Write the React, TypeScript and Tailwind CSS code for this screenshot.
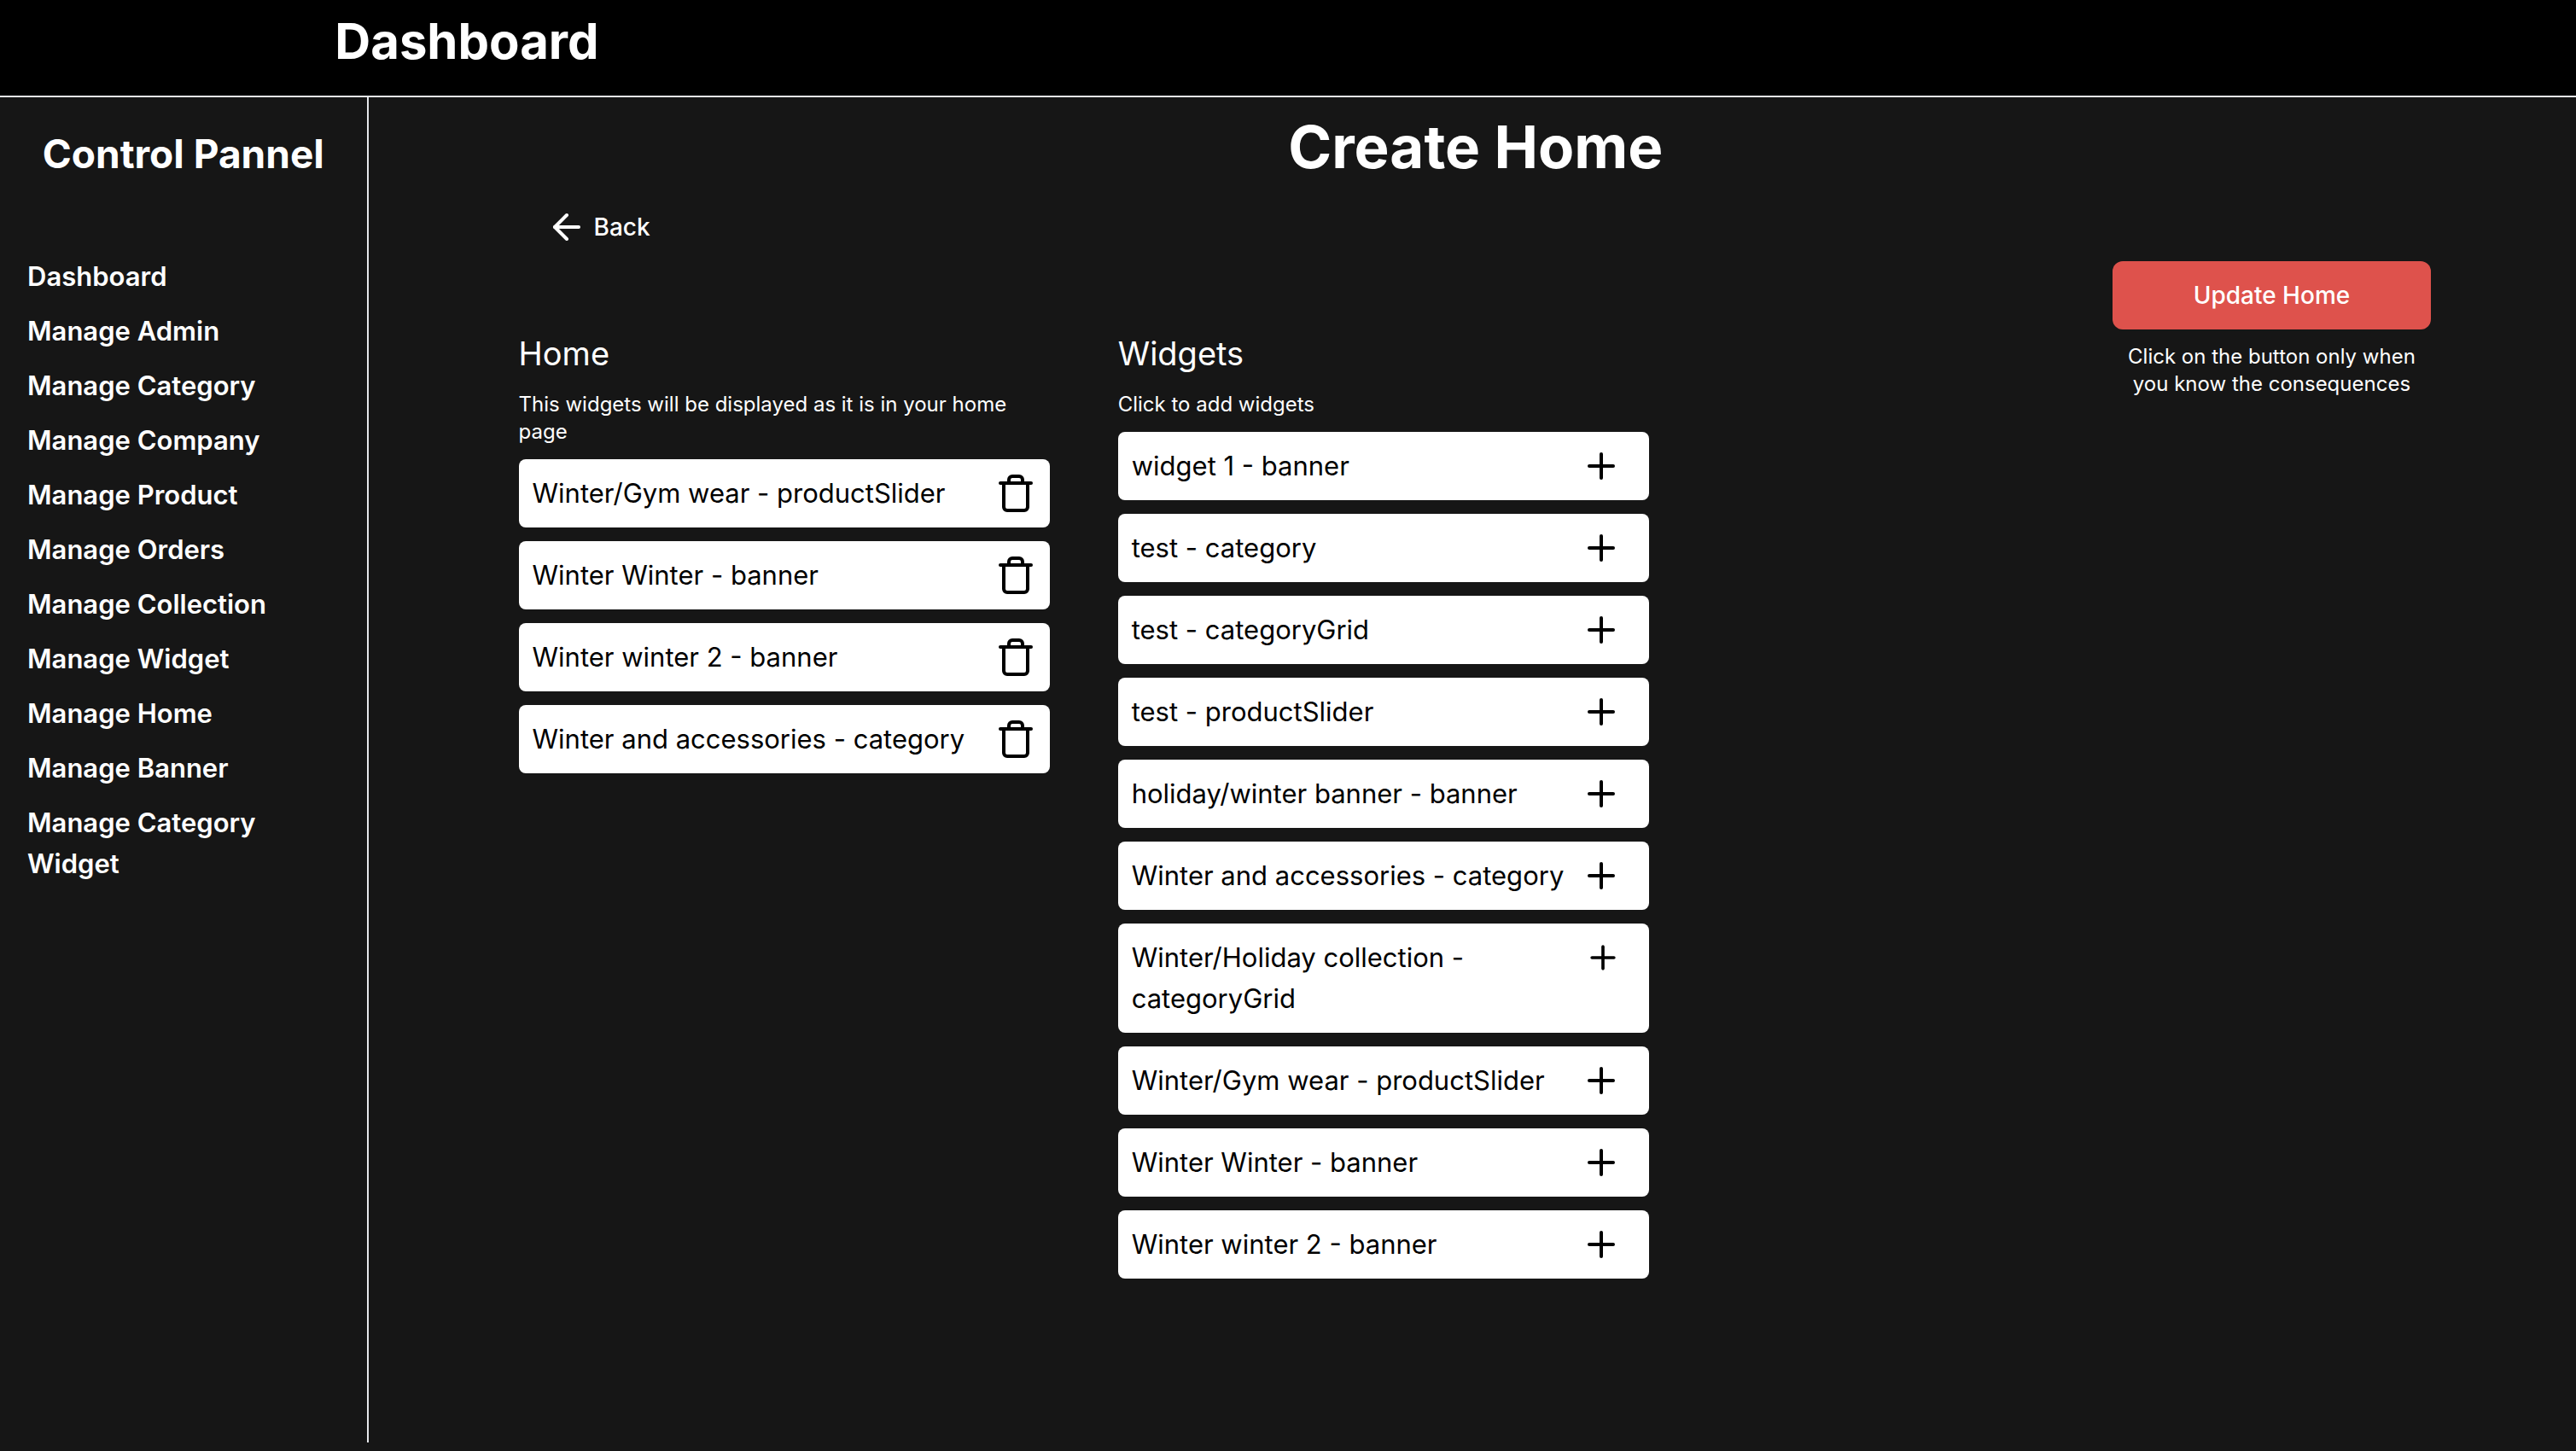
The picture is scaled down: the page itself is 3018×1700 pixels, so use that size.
const navItems = [
  "Dashboard",
  "Manage Admin",
  "Manage Category",
  "Manage Company",
  "Manage Product",
  "Manage Orders",
  "Manage Collection",
  "Manage Widget",
  "Manage Home",
  "Manage Banner",
  "Manage Category Widget",
];

const homeWidgets = [
  "Winter/Gym wear - productSlider",
  "Winter Winter - banner",
  "Winter winter 2 - banner",
  "Winter and accessories - category",
];

const availableWidgets = [
  { name: "widget 1 - banner" },
  { name: "test - category" },
  { name: "test - categoryGrid" },
  { name: "test - productSlider" },
  { name: "holiday/winter banner - banner" },
  { name: "Winter and accessories - category" },
  { name: "Winter/Holiday collection - categoryGrid", wraps: true },
  { name: "Winter/Gym wear - productSlider" },
  { name: "Winter Winter - banner" },
  { name: "Winter winter 2 - banner" },
];

function Icon({ paths, className }: { paths: string[]; className: string }) {
  return (
    <svg
      viewBox="0 0 24 24"
      fill="none"
      stroke="currentColor"
      strokeWidth="2"
      strokeLinecap="round"
      strokeLinejoin="round"
      aria-hidden="true"
      className={className}
    >
      {paths.map((d) => (
        <path key={d} d={d} />
      ))}
    </svg>
  );
}

const arrowLeft = ["M19 12H5", "M12 19l-7-7 7-7"];
const plus = ["M12 5v14", "M5 12h14"];
const trash = [
  "M3 6h18",
  "M19 6v14a2 2 0 0 1-2 2H7a2 2 0 0 1-2-2V6",
  "M8 6V4a2 2 0 0 1 2-2h4a2 2 0 0 1 2 2v2",
];

export default function App() {
  return (
    <div className="flex min-h-screen flex-col bg-[#161616] font-['Inter',sans-serif] text-[31px] leading-[48px] text-white">
      <header className="h-[114px] border-b-2 border-gray-200 bg-black px-[13%] pt-3">
        <h1 className="text-[58px] leading-[72px] font-bold">Dashboard</h1>
      </header>

      <div className="flex flex-1">
        <aside className="mb-[10px] w-[14.3%] shrink-0 border-r-2 border-gray-200 px-8 pt-[34px]">
          <h2 className="text-center text-[46px] leading-[64px] font-bold whitespace-nowrap">Control Pannel</h2>
          <nav className="mt-[88px] flex flex-col gap-4 font-semibold">
            {navItems.map((item) => (
              <a key={item} href="#">
                {item}
              </a>
            ))}
          </nav>
        </aside>

        <main className="min-w-0 flex-1 pt-[18px] pl-2">
          <h2 className="text-center text-[69px] leading-[80px] font-bold">Create Home</h2>

          <div className="mt-[30px] pr-[170px] pl-[168px]">
            <button className="ml-8 flex items-center gap-2 text-[28px] leading-[48px] font-medium">
              <Icon paths={arrowLeft} className="size-12" />
              Back
            </button>

            <div className="mt-4 grid grid-cols-[1324fr_543fr_373fr]">
              <div className="mt-20 grid grid-cols-2 items-start gap-20">
                <section>
                  <h3 className="text-[38px] leading-[56px]">Home</h3>
                  <p className="mt-4 text-[24px] leading-8">
                    This widgets will be displayed as it is in your home page
                  </p>
                  <ul className="mt-4 flex flex-col gap-4">
                    {homeWidgets.map((name) => (
                      <li key={name} className="flex items-center justify-between rounded-lg bg-white p-4 text-black">
                        {name}
                        <button aria-label={`Remove ${name}`}>
                          <Icon paths={trash} className="size-12" />
                        </button>
                      </li>
                    ))}
                  </ul>
                </section>

                <section>
                  <h3 className="text-[38px] leading-[56px]">Widgets</h3>
                  <p className="mt-4 text-[24px] leading-8">Click to add widgets</p>
                  <ul className="mt-4 flex flex-col gap-4">
                    {availableWidgets.map(({ name, wraps }) => (
                      <li key={name} className="flex items-start justify-between rounded-lg bg-white p-4 text-black">
                        {name}
                        <button aria-label={`Add ${name}`} className="mr-4">
                          <Icon paths={plus} className={wraps ? "h-12 w-11" : "size-12"} />
                        </button>
                      </li>
                    ))}
                  </ul>
                </section>
              </div>

              <div className="col-start-3 text-center">
                <button className="w-full rounded-xl bg-[#de524c] py-4 text-[28px] leading-[48px] font-medium">
                  Update Home
                </button>
                <p className="mt-4 px-4 text-[24px] leading-8">
                  Click on the button only when you know the consequences
                </p>
              </div>
            </div>
          </div>
        </main>
      </div>
    </div>
  );
}
